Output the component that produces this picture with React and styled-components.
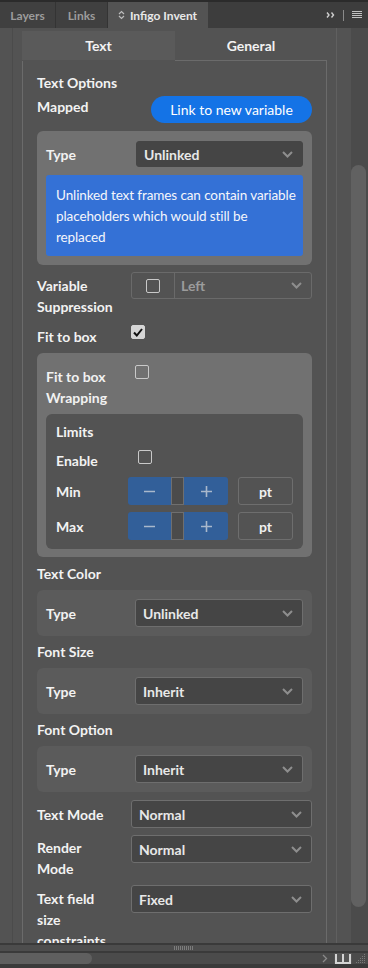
import React from 'react';
import styled, { createGlobalStyle } from 'styled-components';

const GlobalStyle = createGlobalStyle`
    html, body {
        margin: 0;
        padding: 0;
        background: #535353;
    }
    body {
        font-family: Lato, "Liberation Sans", sans-serif;
        -webkit-font-smoothing: antialiased;
    }
`;

const Panel = styled.div`
    width: 368px;
    height: 968px;
    display: flex;
    flex-direction: column;
    background: #535353;
    overflow: hidden;
`;

/* ---------- top tab strip ---------- */

const TabBar = styled.div`
    height: 26px;
    border-top: 2px solid #2b2b2b;
    background: #3d3d3d;
    display: flex;
    flex-shrink: 0;
`;

const PanelTab = styled.div`
    width: ${p => p.$w}px;
    display: flex;
    align-items: center;
    justify-content: center;
    gap: 5px;
    font-size: 12px;
    font-weight: 700;
    color: ${p => (p.$active ? '#e8e8e8' : '#9c9c9c')};
    background: ${p => (p.$active ? '#535353' : '#404040')};
    border-right: 1px solid ${p => (p.$active ? '#535353' : '#343434')};
    box-sizing: border-box;
`;

const BarTools = styled.div`
    margin-left: auto;
    display: flex;
    align-items: center;
    padding-right: 6px;
    gap: 8px;
`;

const BarDivider = styled.div`
    width: 1px;
    height: 11px;
    background: #8a8a8a;
`;

/* ---------- body ---------- */

const Body = styled.div`
    flex: 1;
    display: flex;
    min-height: 0;
`;

const Gutter = styled.div`
    width: 13px;
    border-right: 1px solid #4b4b4b;
    box-sizing: border-box;
`;

const ScrollArea = styled.div`
    width: 324px;
    box-sizing: border-box;
    padding: 3px 9px 0 9px;
    border-right: 1px solid #606060;
    overflow: hidden;
`;

const Spacer = styled.div`
    width: 14px;
`;

const VScroll = styled.div`
    width: 17px;
    background: #4b4b4b;
    display: flex;
    flex-direction: column;
`;

const VThumb = styled.div`
    margin-top: 137px;
    width: 15px;
    height: 742px;
    border-radius: 8px;
    background: #616161;
`;

const InnerTabs = styled.div`
    display: flex;
    height: 30px;
`;

const InnerTab = styled.div`
    flex: ${p => (p.$active ? '0 0 153px' : '1')};
    display: flex;
    align-items: center;
    justify-content: center;
    font-size: 14px;
    font-weight: 700;
    color: #f2f2f2;
    background: ${p => (p.$active ? '#5a5a5a' : 'transparent')};
    background-clip: padding-box;
    border-bottom: 1px solid ${p => (p.$active ? 'transparent' : '#6b6b6b')};
`;

const ContentBox = styled.div`
    border-left: 1px solid #6b6b6b;
    border-right: 1px solid #6b6b6b;
    padding: 11px 14px 40px 14px;
    display: flex;
    flex-direction: column;
`;

const Heading = styled.div`
    font-size: 14px;
    font-weight: 700;
    line-height: 21px;
    color: #f2f2f2;
    margin-top: ${p => p.$mt || 0}px;
`;

const Label = styled.div`
    font-size: 14px;
    font-weight: 700;
    line-height: 21px;
    color: #f2f2f2;
    margin-top: ${p => p.$mt || 0}px;
`;

const Row = styled.div`
    display: grid;
    grid-template-columns: ${p => p.$col || 94}px 1fr;
    align-items: ${p => p.$align || 'start'};
    margin-top: ${p => p.$mt || 0}px;
`;

const MappedRow = styled.div`
    display: flex;
    justify-content: space-between;
    align-items: flex-start;
    margin-top: 3px;
`;

const PillButton = styled.button`
    width: 161px;
    height: 27px;
    border: none;
    border-radius: 14px;
    background: #1473e6;
    color: #ffffff;
    font-family: inherit;
    font-size: 14px;
    padding: 0;
`;

const Group = styled.div`
    background: ${p => (p.$tone === 'light' ? '#717171' : p.$tone === 'dark' ? '#535353' : '#5b5b5b')};
    border-radius: 6px;
    padding: ${p => p.$pad || '9px'};
    margin-top: ${p => p.$mt || 0}px;
    display: flex;
    flex-direction: column;
`;

const SelectBox = styled.div`
    height: ${p => p.$h || 28}px;
    box-sizing: border-box;
    background: #454545;
    border: 1px solid ${p => (p.$flat ? '#454545' : '#6e6e6e')};
    border-radius: 3px;
    display: flex;
    align-items: center;
    justify-content: space-between;
    padding: 0 9px 0 7px;
    font-size: 14px;
    font-weight: 700;
    color: #e8e8e8;
`;

const InfoBox = styled.div`
    margin-top: 8px;
    background: #3471d6;
    border-radius: 3px;
    padding: 10px 4px 8px 10px;
    font-size: 13.5px;
    line-height: 21px;
    letter-spacing: -0.1px;
    white-space: nowrap;
    overflow: hidden;
    color: #f4f6fb;
`;

const SplitControl = styled.div`
    height: 27px;
    box-sizing: border-box;
    border: 1px solid #6a6a6a;
    border-radius: 3px;
    display: flex;
`;

const SplitCheck = styled.div`
    width: 42px;
    border-right: 1px solid #6a6a6a;
    display: flex;
    align-items: center;
    justify-content: center;
`;

const SplitSelect = styled.div`
    flex: 1;
    display: flex;
    align-items: center;
    justify-content: space-between;
    padding: 0 9px 0 6px;
    font-size: 14px;
    font-weight: 700;
    color: #9c9c9c;
`;

const Check = styled.div`
    width: 14px;
    height: 14px;
    box-sizing: border-box;
    border-radius: 2px;
    border: 1px solid ${p => (p.$checked ? '#d6d6d6' : '#c9c9c9')};
    background: ${p => (p.$checked ? '#d6d6d6' : 'transparent')};
    margin-top: ${p => p.$mt || 0}px;
    margin-left: ${p => p.$ml || 0}px;
    display: flex;
    align-items: center;
    justify-content: center;
`;

const Stepper = styled.div`
    width: 100px;
    height: 28px;
    display: flex;
    border-radius: 3px;
    overflow: hidden;
    background: #325f99;
`;

const StepBtn = styled.div`
    width: ${p => p.$w}px;
    display: flex;
    align-items: center;
    justify-content: center;
`;

const StepValue = styled.div`
    width: 13px;
    box-sizing: border-box;
    background: #4b4b4b;
    border: 1px solid #6f6f6f;
`;

const UnitBox = styled.div`
    width: 55px;
    height: 28px;
    box-sizing: border-box;
    margin-left: 10px;
    border: 1px solid #6e6e6e;
    border-radius: 3px;
    display: flex;
    align-items: center;
    justify-content: center;
    font-size: 14px;
    font-weight: 700;
    color: #f0f0f0;
`;

const LimitRow = styled.div`
    display: flex;
    align-items: center;
    margin-top: ${p => p.$mt || 0}px;
`;

const LimitLabel = styled.div`
    width: 72px;
    font-size: 14px;
    font-weight: 700;
    line-height: 21px;
    color: #f2f2f2;
`;

/* ---------- footer ---------- */

const Footer = styled.div`
    height: 25px;
    flex-shrink: 0;
    display: flex;
    flex-direction: column;
    background: #3a3a3a;
`;

const GripBand = styled.div`
    margin-top: 2px;
    height: 6px;
    background: #4d4d4d;
    display: flex;
    justify-content: center;
    align-items: center;
`;

const Grip = styled.div`
    width: 19px;
    height: 4px;
    margin-left: -1px;
    background: repeating-linear-gradient(90deg, #7c7c7c 0 1px, transparent 1px 2px);
`;

const HScroll = styled.div`
    margin-top: 2px;
    height: 11px;
    background: #4b4b4b;
    display: flex;
    align-items: center;
`;

const HThumb = styled.div`
    width: 92px;
    height: 100%;
    background: #5f5f5f;
    border-radius: 0 6px 6px 0;
`;

const HTools = styled.div`
    margin-left: auto;
    display: flex;
    align-items: center;
    height: 100%;
`;

const ViewBtn = styled.div`
    margin-left: 6px;
    width: 18px;
    height: 100%;
    background: #555555;
    display: flex;
    align-items: center;
    justify-content: center;
`;

const Chevron = () => (
    <svg width="11" height="7" viewBox="0 0 11 7">
        <polyline points="1,1 5.5,5.5 10,1" fill="none" stroke="#8e8e8e" strokeWidth="2" />
    </svg>
);

const Select = ({ value, h, flat }) => (
    <SelectBox $h={h} $flat={flat}>
        <span>{value}</span>
        <Chevron />
    </SelectBox>
);

const CheckMark = () => (
    <svg width="10" height="9" viewBox="0 0 10 9">
        <polyline points="1,4.5 3.8,7.5 9,1" fill="none" stroke="#111" strokeWidth="2" />
    </svg>
);

const Minus = () => (
    <svg width="11" height="11" viewBox="0 0 11 11">
        <line x1="0" y1="5.5" x2="11" y2="5.5" stroke="#a9b8cc" strokeWidth="1.6" />
    </svg>
);

const Plus = () => (
    <svg width="11" height="11" viewBox="0 0 11 11">
        <line x1="0" y1="5.5" x2="11" y2="5.5" stroke="#a9b8cc" strokeWidth="1.6" />
        <line x1="5.5" y1="0" x2="5.5" y2="11" stroke="#a9b8cc" strokeWidth="1.6" />
    </svg>
);

const TypeGroup = ({ value, mt }) => (
    <Group $mt={mt}>
        <Row $col={89} $align="center">
            <Label>Type</Label>
            <Select value={value} />
        </Row>
    </Group>
);

const LimitField = ({ label, mt }) => (
    <LimitRow $mt={mt}>
        <LimitLabel>{label}</LimitLabel>
        <Stepper>
            <StepBtn $w={43}><Minus /></StepBtn>
            <StepValue />
            <StepBtn $w={44}><Plus /></StepBtn>
        </Stepper>
        <UnitBox>pt</UnitBox>
    </LimitRow>
);

const App = () => {
    return (
        <Panel>
            <GlobalStyle />
            <TabBar>
                <PanelTab $w={56}>Layers</PanelTab>
                <PanelTab $w={52}>Links</PanelTab>
                <PanelTab $w={100} $active>
                    <svg width="7" height="10" viewBox="0 0 7 10">
                        <polyline points="1,4 3.5,1.5 6,4" fill="none" stroke="#bdbdbd" strokeWidth="1.2" />
                        <polyline points="1,6 3.5,8.5 6,6" fill="none" stroke="#bdbdbd" strokeWidth="1.2" />
                    </svg>
                    Infigo Invent
                </PanelTab>
                <BarTools>
                    <svg width="9" height="6" viewBox="0 0 9 6">
                        <polyline points="1,0.5 3,3 1,5.5" fill="none" stroke="#cfcfcf" strokeWidth="1.4" />
                        <polyline points="5.5,0.5 7.5,3 5.5,5.5" fill="none" stroke="#cfcfcf" strokeWidth="1.4" />
                    </svg>
                    <BarDivider />
                    <svg width="10" height="8" viewBox="0 0 10 8">
                        <rect x="0" y="0" width="10" height="1" fill="#c2c2c2" />
                        <rect x="0" y="2" width="10" height="1" fill="#c2c2c2" />
                        <rect x="0" y="4" width="10" height="1" fill="#c2c2c2" />
                        <rect x="0" y="6" width="10" height="1" fill="#c2c2c2" />
                    </svg>
                </BarTools>
            </TabBar>

            <Body>
                <Gutter />
                <ScrollArea>
                    <InnerTabs>
                        <InnerTab $active>Text</InnerTab>
                        <InnerTab>General</InnerTab>
                    </InnerTabs>
                    <ContentBox>
                        <Heading>Text Options</Heading>
                        <MappedRow>
                            <Label>Mapped</Label>
                            <PillButton>Link to new variable</PillButton>
                        </MappedRow>

                        <Group $tone="light" $mt={8} $pad="10px 9px 9px 9px">
                            <Row $col={90} $align="center">
                                <Label>Type</Label>
                                <Select value="Unlinked" h={26} flat />
                            </Row>
                            <InfoBox>
                                Unlinked text frames can contain variable<br />
                                placeholders which would still be<br />
                                replaced
                            </InfoBox>
                        </Group>

                        <Row $mt={7}>
                            <Label $mt={3}>Variable<br />Suppression</Label>
                            <SplitControl>
                                <SplitCheck><Check /></SplitCheck>
                                <SplitSelect>
                                    <span>Left</span>
                                    <Chevron />
                                </SplitSelect>
                            </SplitControl>
                        </Row>

                        <Row $mt={9}>
                            <Label>Fit to box</Label>
                            <Check $checked $mt={-1}><CheckMark /></Check>
                        </Row>

                        <Group $tone="light" $mt={6} $pad="13px 9px 8px 9px">
                            <Row $col={89}>
                                <Label>Fit to box<br />Wrapping</Label>
                                <Check $mt={-1} />
                            </Row>
                            <Group $tone="dark" $mt={6} $pad="7px 10px 9px 10px">
                                <Label>Limits</Label>
                                <LimitRow $mt={8}>
                                    <LimitLabel>Enable</LimitLabel>
                                    <Check $ml={10} $mt={-8} />
                                </LimitRow>
                                <LimitField label="Min" mt={6} />
                                <LimitField label="Max" mt={7} />
                            </Group>
                        </Group>

                        <Heading $mt={6}>Text Color</Heading>
                        <TypeGroup value="Unlinked" mt={6} />
                        <Heading $mt={5}>Font Size</Heading>
                        <TypeGroup value="Inherit" mt={6} />
                        <Heading $mt={5}>Font Option</Heading>
                        <TypeGroup value="Inherit" mt={6} />

                        <Row $mt={8} $align="center">
                            <Label>Text Mode</Label>
                            <Select value="Normal" />
                        </Row>
                        <Row $mt={7}>
                            <Label $mt={2}>Render<br />Mode</Label>
                            <Select value="Normal" />
                        </Row>
                        <Row $mt={6}>
                            <Label $mt={3}>Text field<br />size<br />constraints</Label>
                            <Select value="Fixed" />
                        </Row>
                    </ContentBox>
                </ScrollArea>
                <Spacer />
                <VScroll>
                    <VThumb />
                </VScroll>
            </Body>

            <Footer>
                <GripBand><Grip /></GripBand>
                <HScroll>
                    <HThumb />
                    <HTools>
                        <svg width="6" height="9" viewBox="0 0 6 9">
                            <polyline points="1,1 4.5,4.5 1,8" fill="none" stroke="#8a8a8a" strokeWidth="1.3" />
                        </svg>
                        <ViewBtn>
                            <svg width="16" height="10" viewBox="0 0 16 10">
                                <rect x="0" y="0" width="2" height="10" fill="#d4d4d4" />
                                <rect x="7" y="0" width="2" height="10" fill="#d4d4d4" />
                                <rect x="14" y="0" width="2" height="10" fill="#d4d4d4" />
                                <rect x="0" y="8" width="16" height="2" fill="#d4d4d4" />
                            </svg>
                        </ViewBtn>
                        <svg width="12" height="11" viewBox="0 0 12 11" style={{ margin: '0 1px 0 3px' }}>
                            <g fill="#7a7a7a">
                                <rect x="9" y="1" width="1" height="1" />
                                <rect x="7" y="3" width="1" height="1" />
                                <rect x="9" y="3" width="1" height="1" />
                                <rect x="5" y="5" width="1" height="1" />
                                <rect x="7" y="5" width="1" height="1" />
                                <rect x="9" y="5" width="1" height="1" />
                                <rect x="3" y="7" width="1" height="1" />
                                <rect x="5" y="7" width="1" height="1" />
                                <rect x="7" y="7" width="1" height="1" />
                                <rect x="9" y="7" width="1" height="1" />
                                <rect x="1" y="9" width="1" height="1" />
                                <rect x="3" y="9" width="1" height="1" />
                                <rect x="5" y="9" width="1" height="1" />
                                <rect x="7" y="9" width="1" height="1" />
                                <rect x="9" y="9" width="1" height="1" />
                            </g>
                        </svg>
                    </HTools>
                </HScroll>
            </Footer>
        </Panel>
    );
};

export default App;
